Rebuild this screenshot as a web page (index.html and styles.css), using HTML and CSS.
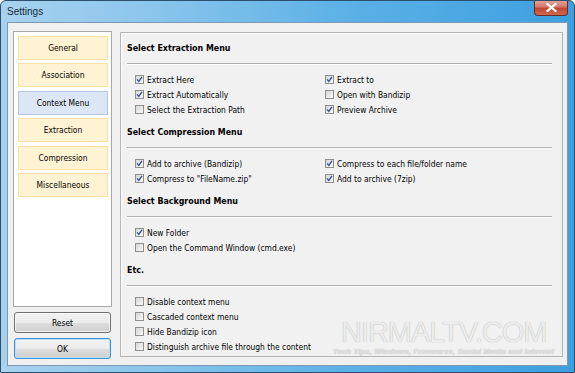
FILE: index.html
```html
<!DOCTYPE html>
<html lang="en">
<head>
    <meta charset="UTF-8">
    <title>Settings</title>
    <link rel="stylesheet" href="styles.css">
</head>
<body>
    <div class="window">
        <div class="titlebar">
            <span class="title">Settings</span>
            <span class="close">
                <svg width="11" height="9" viewBox="0 0 11 9">
                    <path d="M1.5 1 L9.5 8 M9.5 1 L1.5 8" stroke="#fff" stroke-width="2.2" stroke-linecap="square"/>
                </svg>
            </span>
        </div>

        <div class="client">
            <div class="side">
                <div class="nav">
                    <div class="nav-item">General</div>
                    <div class="nav-item">Association</div>
                    <div class="nav-item active">Context Menu</div>
                    <div class="nav-item">Extraction</div>
                    <div class="nav-item">Compression</div>
                    <div class="nav-item">Miscellaneous</div>
                </div>
                <button class="btn">Reset</button>
                <button class="btn default">OK</button>
            </div>

            <div class="panel">
                <div class="section">
                    <h3>Select Extraction Menu</h3>
                    <div class="opts two">
                        <label class="opt"><span class="cb on"><svg viewBox="0 0 7 7"><path d="M1 3.4 L2.8 5.4 L6 0.9"/></svg></span>Extract Here</label>
                        <label class="opt"><span class="cb on"><svg viewBox="0 0 7 7"><path d="M1 3.4 L2.8 5.4 L6 0.9"/></svg></span>Extract to</label>
                        <label class="opt"><span class="cb on"><svg viewBox="0 0 7 7"><path d="M1 3.4 L2.8 5.4 L6 0.9"/></svg></span>Extract Automatically</label>
                        <label class="opt"><span class="cb"></span>Open with Bandizip</label>
                        <label class="opt"><span class="cb"></span>Select the Extraction Path</label>
                        <label class="opt"><span class="cb on"><svg viewBox="0 0 7 7"><path d="M1 3.4 L2.8 5.4 L6 0.9"/></svg></span>Preview Archive</label>
                    </div>
                </div>

                <div class="section">
                    <h3>Select Compression Menu</h3>
                    <div class="opts two">
                        <label class="opt"><span class="cb on"><svg viewBox="0 0 7 7"><path d="M1 3.4 L2.8 5.4 L6 0.9"/></svg></span>Add to archive (Bandizip)</label>
                        <label class="opt"><span class="cb on"><svg viewBox="0 0 7 7"><path d="M1 3.4 L2.8 5.4 L6 0.9"/></svg></span>Compress to each file/folder name</label>
                        <label class="opt"><span class="cb on"><svg viewBox="0 0 7 7"><path d="M1 3.4 L2.8 5.4 L6 0.9"/></svg></span>Compress to "FileName.zip"</label>
                        <label class="opt"><span class="cb on"><svg viewBox="0 0 7 7"><path d="M1 3.4 L2.8 5.4 L6 0.9"/></svg></span>Add to archive (7zip)</label>
                    </div>
                </div>

                <div class="section">
                    <h3>Select Background Menu</h3>
                    <div class="opts">
                        <label class="opt"><span class="cb on"><svg viewBox="0 0 7 7"><path d="M1 3.4 L2.8 5.4 L6 0.9"/></svg></span>New Folder</label>
                        <label class="opt"><span class="cb"></span>Open the Command Window (cmd.exe)</label>
                    </div>
                </div>

                <div class="section">
                    <h3>Etc.</h3>
                    <div class="opts">
                        <label class="opt"><span class="cb"></span>Disable context menu</label>
                        <label class="opt"><span class="cb"></span>Cascaded context menu</label>
                        <label class="opt"><span class="cb"></span>Hide Bandizip icon</label>
                        <label class="opt"><span class="cb"></span>Distinguish archive file through the content</label>
                    </div>
                </div>
            </div>
        </div>

        <!-- site watermark stamped over the screenshot -->
        <div class="watermark">
            <div class="wm-big">NIRMALTV.COM</div>
            <div class="wm-small">Tech Tips, Windows, Freewares, Social Media and Internet</div>
        </div>
    </div>
</body>
</html>
```

FILE: styles.css
```css
body {
    margin: 0;
    background: #fff;
    font-family: "DejaVu Sans Condensed", "DejaVu Sans", sans-serif;
    font-stretch: condensed;
    font-size: 8.4px;
    color: #000;
}

.window {
    position: relative;
    width: 575px;
    height: 373px;
    box-sizing: border-box;
    display: flex;
    flex-direction: column;
    border: 1px solid #2c4f6e;
    border-radius: 6px 6px 0 0;
    background: linear-gradient(to right, #a8d2ef 0%, #8cc6ec 25%, #5cb1e6 60%, #3d9fdf 100%);
    overflow: hidden;
}

.titlebar {
    flex: none;
    height: 21px;
    display: flex;
    justify-content: space-between;
    align-items: flex-start;
    padding-left: 6px;
}

.title {
    font-family: "Liberation Sans", sans-serif;
    font-stretch: normal;
    font-size: 10px;
    padding-top: 5px;
    color: #16283a;
}

.close {
    width: 34px;
    height: 16px;
    margin-right: 6px;
    margin-top: -1px;
    display: flex;
    align-items: center;
    justify-content: center;
    box-sizing: border-box;
    border: 1px solid #6b2c24;
    border-top: none;
    border-radius: 0 0 4px 4px;
    background: linear-gradient(to bottom, #e3a89c 0%, #d47a6b 45%, #c24632 55%, #cf6a4e 100%);
}

.client {
    flex: 1;
    min-height: 0;
    display: flex;
    gap: 8px;
    margin: 0 6px 6px 6px;
    padding: 8px 4px 6px 5px;
    background: #f0f0f0;
    border: 1px solid #7d98b3;
}

/* left column */
.side {
    width: 99px;
    display: flex;
    flex-direction: column;
    gap: 5px;
}

.nav {
    flex: 1;
    display: flex;
    flex-direction: column;
    gap: 3.4px;
    padding: 4px 3px 4px 4px;
    background: #fff;
    border: 1px solid #a9a9a9;
}

.nav-item {
    height: 24px;
    flex: none;
    box-sizing: border-box;
    display: flex;
    align-items: center;
    justify-content: center;
    background: #fff3d3;
    border: 1px solid #fbe2a4;
}

.nav-item.active {
    background: #dce6f5;
    border-color: #b3c7e5;
}

.btn {
    height: 21px;
    flex: none;
    margin: 0 1px;
    font-family: inherit;
    font-stretch: condensed;
    font-size: 8.4px;
    color: #000;
    border: 1px solid #707070;
    border-radius: 3px;
    background: linear-gradient(to bottom, #f2f2f2 0%, #ebebeb 50%, #dddddd 51%, #cfcfcf 100%);
    box-shadow: inset 0 0 0 1px rgba(255, 255, 255, 0.7);
}

.btn.default {
    border-color: #3c8fd0;
    box-shadow: inset 0 0 0 1px #b9e1f9;
}

/* right column */
.panel {
    flex: 1;
    margin: 1px 0 2px;
    padding: 7px 10px 0 6px;
    overflow: hidden;
    background: #f1f1f1;
    border: 1px solid #b5b5b5;
    box-shadow: inset 1px 1px 0 #fff;
}

.section h3 {
    margin: 0;
    height: 16px;
    line-height: 16px;
    font-size: 8.8px;
    font-weight: bold;
    border-bottom: 1px solid #b0b0b0;
    box-shadow: 0 1px 0 #fff;
    padding-bottom: 7px;
    box-sizing: content-box;
}

.opts {
    display: grid;
    grid-template-columns: 1fr;
    padding: 8px 0 7px 8px;
}

.section:last-child .opts {
    padding-bottom: 0;
}

.opts.two {
    grid-template-columns: 190px 1fr;
}

.opt {
    height: 15px;
    display: flex;
    align-items: center;
    gap: 3px;
}

.cb {
    width: 7px;
    height: 7px;
    border: 1px solid #8e8f8f;
    background: linear-gradient(135deg, #d6d6d6, #f9f9f9);
    display: flex;
}

.cb svg {
    width: 7px;
    height: 7px;
}

.cb svg path {
    fill: none;
    stroke: #3a5594;
    stroke-width: 1.4;
}

/* watermark */
.watermark {
    position: absolute;
    left: 332px;
    top: 316px;
    font-family: "Liberation Sans", sans-serif;
    font-stretch: normal;
    text-align: center;
}

.wm-big {
    font-size: 29px;
    letter-spacing: -1px;
    line-height: 30px;
    color: #ececec;
    text-shadow: 0 0 1px #a8a8a8;
}

.wm-small {
    font-size: 7.6px;
    font-style: italic;
    font-weight: bold;
    letter-spacing: 0.2px;
    color: #e4e4e4;
    text-shadow: 0 0 1px #a8a8a8;
}
```
